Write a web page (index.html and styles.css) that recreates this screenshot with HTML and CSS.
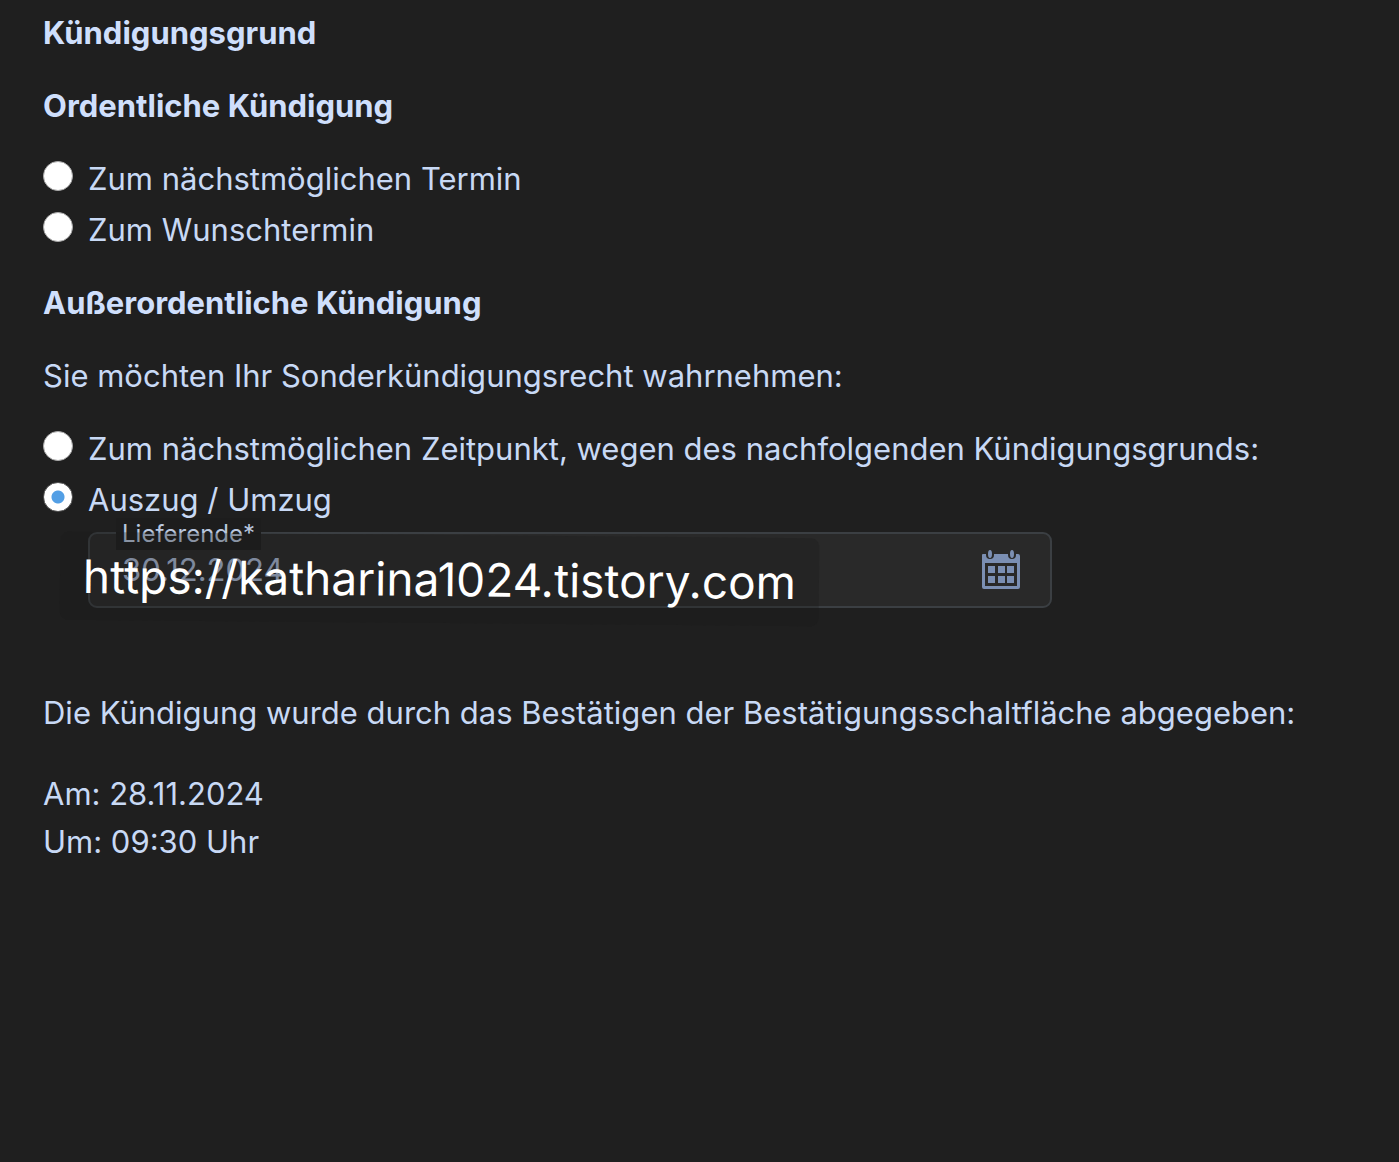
FILE: index.html
```html
<!DOCTYPE html>
<html lang="de">
<head>
<meta charset="utf-8">
<meta name="viewport" content="width=device-width, initial-scale=1">
<title>Kündigung</title>
<link rel="stylesheet" href="styles.css">
</head>
<body>
<main class="page">
  <form class="form">
    <h1 class="title">Kündigungsgrund</h1>
    <h2 class="title">Ordentliche Kündigung</h2>
    <div class="options">
      <label class="option"><input class="radio" type="radio" name="grund"><span>Zum nächstmöglichen Termin</span></label>
      <label class="option"><input class="radio" type="radio" name="grund"><span>Zum Wunschtermin</span></label>
    </div>
    <h2 class="title">Außerordentliche Kündigung</h2>
    <p class="text">Sie möchten Ihr Sonderkündigungsrecht wahrnehmen:</p>
    <div class="options">
      <label class="option"><input class="radio" type="radio" name="grund"><span>Zum nächstmöglichen Zeitpunkt, wegen des nachfolgenden Kündigungsgrunds:</span></label>
      <label class="option"><input class="radio" type="radio" name="grund" checked><span>Auszug / Umzug</span></label>
    </div>
    <div class="field">
      <label class="field-label" for="lieferende">Lieferende*</label>
      <input class="field-input" id="lieferende" type="text" value="30.12.2024">
      <button class="calendar" type="button" aria-label="Kalender">
        <svg width="40" height="40" viewBox="0 0 40 40" aria-hidden="true">
          <path fill="#7b8fb3" fill-rule="evenodd" d="M2 4H37Q39 4 39 6V37Q39 39 37 39H3Q1 39 1 37V5Q1 4 2 4ZM4 13V36H36V13Z"/>
          <path fill="#7b8fb3" d="M7 16h7v7H7zM17 16h7v7h-7zM26 16h7v7h-7zM7 26h7v7H7zM17 26h7v7h-7zM26 26h7v7h-7z"/>
          <path fill="#292929" d="M5 3H13V5Q13 9 9 9Q5 9 5 5ZM27 3H35V5Q35 9 31 9Q27 9 27 5Z"/>
          <path fill="#7b8fb3" d="M9 0Q11 0 11 4Q11 8 9 8Q7 8 7 4Q7 0 9 0ZM31 0Q33 0 33 4Q33 8 31 8Q29 8 29 4Q29 0 31 0Z"/>
        </svg>
      </button>
      <div class="watermark">https://katharina1024.tistory.com</div>
    </div>
  </form>
  <section class="summary">
    <p class="text">Die Kündigung wurde durch das Bestätigen der Bestätigungsschaltfläche abgegeben:</p>
    <p class="text">Am: 28.11.2024<br>Um: 09:30 Uhr</p>
  </section>
</main>
</body>
</html>
```
FILE: styles.css
```css
* { box-sizing: border-box; }
body {
  margin: 0;
  background: #1f1f1f;
  color: #c8d9f5;
  font-family: Inter, "Liberation Sans", sans-serif;
  font-size: 31px;
  line-height: 48px;
}
.page { padding: 9px 43px; }
.form { display: flex; flex-direction: column; gap: 25px; }
.title, .text { margin: 0; font-size: inherit; }
.title { color: #cfdffc; font-weight: 700; }
.options { display: flex; flex-direction: column; gap: 3px; }
.option { display: flex; align-items: flex-start; gap: 15px; }
.radio {
  appearance: none;
  flex: none;
  width: 30px;
  height: 30px;
  margin: 6px 0 0;
  border: 1px solid #aaa;
  border-radius: 50%;
  background: #fff;
}
.radio:checked {
  border-color: #555;
  background: radial-gradient(circle, #539fe5 6px, #fff 7px);
}
.field {
  position: relative;
  display: flex;
  align-items: center;
  width: calc(100% - 45px);
  max-width: 964px;
  height: 76px;
  margin: -17px 0 0 45px;
  padding: 0 29px 0 32px;
  border: 2px solid #3b3f43;
  border-radius: 9px;
  background: #292929;
}
.field-label {
  position: absolute;
  top: -16px;
  left: 26px;
  padding: 0 6px;
  background: #1d1d1d;
  color: #b9c7df;
  font-size: 24px;
  line-height: 32px;
}
.field-input {
  flex: 1;
  min-width: 0;
  padding: 0;
  border: 0;
  background: none;
  color: #a9b9d6;
  font: inherit;
}
.calendar { display: flex; padding: 0; border: 0; background: none; }
.watermark {
  position: absolute;
  top: 1px;
  left: -30px;
  padding: 12px 23px;
  border-radius: 8px;
  background: rgb(28 28 28 / 30%);
  color: #fff;
  font-size: 46px;
  line-height: 64px;
  white-space: nowrap;
  transform: rotate(0.5deg);
}
.summary { display: flex; flex-direction: column; gap: 33px; padding-top: 81px; }
```
